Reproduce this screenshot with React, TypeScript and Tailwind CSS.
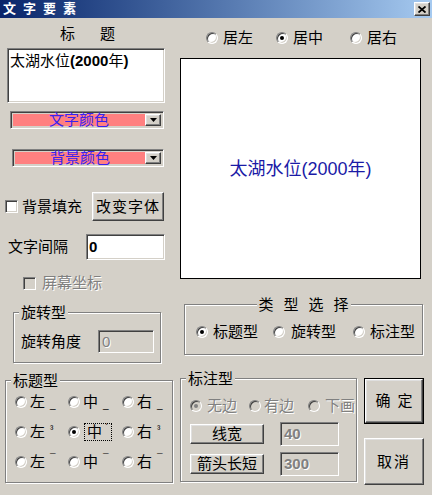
import React from 'react';

const raised =
  'border border-t-white border-l-white border-r-[#404040] border-b-[#404040] shadow-[inset_-1px_-1px_0_#808080,inset_1px_1px_0_#dfdfdf]';
const sunken =
  'border border-t-[#808080] border-l-[#808080] border-r-white border-b-white shadow-[inset_1px_1px_0_#404040,inset_-1px_-1px_0_#d4d0c8]';
const etched = 'border border-[#808080] shadow-[inset_1px_1px_0_#fff,1px_1px_0_#fff]';
const dim = 'text-[#808080] [text-shadow:1px_1px_0_#fff]';

const Radio = ({ on = false, off = false, className = '' }: { on?: boolean; off?: boolean; className?: string }) => (
  <span
    className={`flex h-3 w-3 shrink-0 items-center justify-center rounded-full border border-t-[#808080] border-l-[#808080] border-r-white border-b-white shadow-[inset_1px_1px_0_#404040,inset_-1px_-1px_0_#d4d0c8] ${
      off ? 'bg-[#d4d0c8]' : 'bg-white'
    } ${className}`}
  >
    {on && <span className={`h-1 w-1 rounded-full ${off ? 'bg-[#808080]' : 'bg-black'}`} />}
  </span>
);

const Check = ({ off = false, className = '' }: { off?: boolean; className?: string }) => (
  <span className={`block h-[13px] w-[13px] shrink-0 ${sunken} ${off ? 'bg-[#d4d0c8]' : 'bg-white'} ${className}`} />
);

const Group = ({
  label,
  className = '',
  legendClass = 'left-[5px]',
  children,
}: {
  label: React.ReactNode;
  className?: string;
  legendClass?: string;
  children?: React.ReactNode;
}) => (
  <div className={`relative shrink-0 ${etched} ${className}`}>
    <span className={`absolute -top-[9px] bg-[#d4d0c8] px-[2px] leading-[17px] ${legendClass}`}>{label}</span>
    {children}
  </div>
);

const Combo = ({ label, className = '' }: { label: string; className?: string }) => (
  <div className={`flex h-[18px] p-[2px] ${sunken} ${className}`}>
    <div className="flex flex-1 items-center justify-center bg-[#ff8080] leading-[14px] text-[#3a22f0]">{label}</div>
    <div className={`flex w-[16px] items-center justify-center bg-[#d4d0c8] ${raised}`}>
      <svg width="7" height="4" viewBox="0 0 7 4">
        <path d="M0 0h7L3.5 4z" fill="#000" />
      </svg>
    </div>
  </div>
);

const Cell = ({ t, mark, on = false }: { t: string; mark: string; on?: boolean }) => (
  <div className="flex h-[16px] items-center">
    <Radio on={on} />
    {on ? (
      <span className="ml-[4px] flex h-[18px] items-center border border-dotted border-black pl-[2px] pr-[3px]">
        {t}
        <span className="ml-[3px] self-start text-[10px] leading-[10px]">{mark}</span>
      </span>
    ) : (
      <>
        <span className="ml-[3px]">{t}</span>
        <span className={`ml-[5px] text-[10px] leading-[10px] ${mark === '_' ? 'self-end' : 'self-start'}`}>{mark}</span>
      </>
    )}
  </div>
);

export default function App() {
  return (
    <div className="h-[495px] w-[432px] select-none overflow-hidden bg-[#d4d0c8] font-['Liberation_Sans','Noto_Sans_CJK_SC',sans-serif] text-[15px] leading-[16px] text-black">
      {/* title bar */}
      <div className="flex h-[18px] items-center justify-between bg-gradient-to-r from-[#0a246a] to-[#a6caf0] pl-[3px] pr-[2px]">
        <div className="flex gap-[7px] text-[13px] font-bold leading-[14px] text-white">
          <span>文</span>
          <span>字</span>
          <span>要</span>
          <span>素</span>
        </div>
        <button className={`flex h-[14px] w-[16px] items-center justify-center bg-[#d4d0c8] ${raised}`}>
          <svg width="8" height="7" viewBox="0 0 8 7">
            <path d="M0.5 0.5L7.5 6.5M7.5 0.5L0.5 6.5" stroke="#000" strokeWidth="1.8" />
          </svg>
        </button>
      </div>

      {/* upper part */}
      <div className="flex h-[345px]">
        <div className="flex w-[180px] shrink-0 flex-col">
          <div className="mt-[8px] flex h-[16px] w-[175px] justify-center gap-[25px]">
            <span>标</span>
            <span>题</span>
          </div>
          <div className={`ml-[7px] mt-[6px] h-[55px] w-[158px] bg-white px-[2px] pt-[3px] leading-[18px] ${sunken}`}>
            太湖水位<b>(2000</b>年<b>)</b>
          </div>
          <Combo label="文字颜色" className="ml-[10px] mt-[8px] w-[154px]" />
          <Combo label="背景颜色" className="ml-[12px] mt-[20px] w-[152px]" />

          <div className="mt-[25px] flex h-[29px] items-center">
            <Check className="ml-[5px]" />
            <span className="ml-[4px] w-[66px] whitespace-nowrap">背景填充</span>
            <button className={`ml-[4px] h-[29px] w-[72px] bg-[#d4d0c8] tracking-[1px] ${raised}`}>改变字体</button>
          </div>

          <div className="mt-[13px] flex h-[26px] items-center">
            <span className="ml-[8px]">文字间隔</span>
            <div className={`ml-[18px] flex h-[26px] w-[79px] items-center bg-white px-[2px] font-bold ${sunken}`}>0</div>
          </div>

          <div className="mt-[15px] flex h-[16px] items-center">
            <Check off className="ml-[23px]" />
            <span className={`ml-[6px] ${dim}`}>屏幕坐标</span>
          </div>

          <Group label="旋转型" className="ml-[13px] mt-[21px] h-[51px] w-[148px]">
            <div className="flex items-center pl-[7px] pt-[17px]">
              <span>旋转角度</span>
              <div className={`ml-[17px] flex h-[23px] w-[56px] items-center bg-[#d4d0c8] px-[3px] ${dim} ${sunken}`}>0</div>
            </div>
          </Group>
        </div>

        <div className="flex w-[244px] flex-col">
          <div className="mt-[12px] flex h-[16px] items-center">
            <Radio className="ml-[26px]" />
            <span className="ml-[5px]">居左</span>
            <Radio on className="ml-[23px]" />
            <span className="ml-[5px]">居中</span>
            <Radio className="ml-[27px]" />
            <span className="ml-[5px]">居右</span>
          </div>

          <div className="mt-[12px] flex h-[221px] w-[241px] items-center justify-center border border-black bg-white text-[18px] leading-[20px] text-[#1a1aa6]">
            太湖水位(2000年)
          </div>

          <Group
            label={
              <span className="flex gap-[10px]">
                <span>类</span>
                <span>型</span>
                <span>选</span>
                <span>择</span>
              </span>
            }
            legendClass="left-1/2 -translate-x-1/2"
            className="ml-[4px] mt-[25px] h-[51px] w-[239px]"
          >
            <div className="mt-[19px] flex h-[16px] items-center">
              <Radio on className="ml-[11px]" />
              <span className="ml-[5px] w-[45px] whitespace-nowrap">标题型</span>
              <Radio className="ml-[15px]" />
              <span className="ml-[6px] w-[45px] whitespace-nowrap">旋转型</span>
              <Radio className="ml-[17px]" />
              <span className="ml-[5px] w-[45px] whitespace-nowrap">标注型</span>
            </div>
          </Group>
        </div>
      </div>

      {/* lower part */}
      <div className="mt-[15px] flex items-start">
        <Group label="标题型" className="ml-[5px] mt-[2px] h-[103px] w-[168px]">
          <div className="grid grid-cols-[53px_54px_1fr] gap-y-[14px] pl-[9px] pt-[13px]">
            <Cell t="左" mark="_" />
            <Cell t="中" mark="_" />
            <Cell t="右" mark="_" />
            <Cell t="左" mark="³" />
            <Cell t="中" mark="ˊ" on />
            <Cell t="右" mark="³" />
            <Cell t="左" mark="¯" />
            <Cell t="中" mark="¯" />
            <Cell t="右" mark="¯" />
          </div>
        </Group>

        <Group label="标注型" className="ml-[7px] h-[104px] w-[177px]">
          <div className="mt-[19px] flex h-[16px] items-center pl-[9px]">
            <Radio on off />
            <span className={`ml-[5px] w-[30px] whitespace-nowrap ${dim}`}>无边</span>
            <Radio off className="ml-[12px]" />
            <span className={`ml-[3px] w-[33px] whitespace-nowrap ${dim}`}>有边</span>
            <Radio off className="ml-[11px]" />
            <span className={`ml-[5px] w-[30px] whitespace-nowrap ${dim}`}>下画</span>
          </div>
          <div className="mt-[8px] flex h-[24px] items-center pl-[9px]">
            <button className={`h-[20px] w-[74px] bg-[#d4d0c8] leading-[16px] ${raised}`}>线宽</button>
            <div className={`ml-[16px] flex h-[24px] w-[59px] items-center bg-[#d4d0c8] px-[3px] font-bold ${dim} ${sunken}`}>40</div>
          </div>
          <div className="mt-[6px] flex h-[24px] items-center pl-[9px]">
            <button className={`h-[20px] w-[74px] bg-[#d4d0c8] leading-[16px] ${raised}`}>箭头长短</button>
            <div className={`ml-[16px] flex h-[24px] w-[59px] items-center bg-[#d4d0c8] px-[3px] font-bold ${dim} ${sunken}`}>300</div>
          </div>
        </Group>

        <div className="ml-[7px] flex w-[60px] flex-col">
          <button className="h-[46px] w-[60px] border border-black bg-[#d4d0c8] p-0">
            <span className={`flex h-full w-full items-center justify-center gap-[7px] ${raised}`}>
              <span>确</span>
              <span>定</span>
            </span>
          </button>
          <button className={`mt-[14px] flex h-[47px] w-[60px] items-center justify-center bg-[#d4d0c8] tracking-[2px] ${raised}`}>
            取消
          </button>
        </div>
      </div>
    </div>
  );
}
